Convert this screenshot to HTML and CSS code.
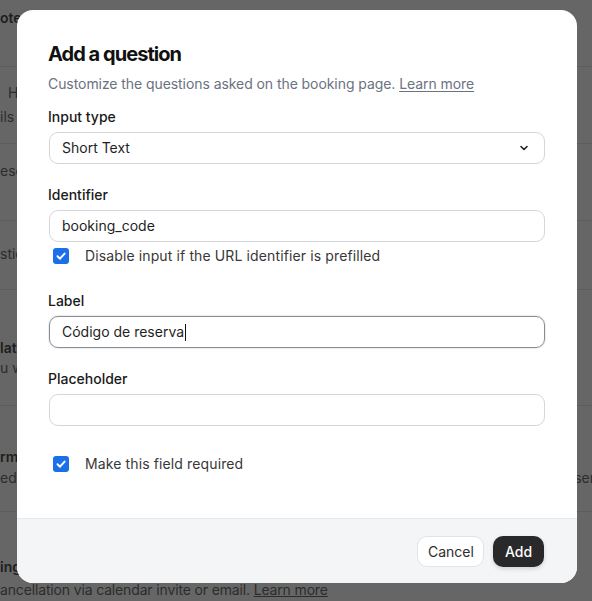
FILE: index.html
```html
<!DOCTYPE html>
<html>
<head>
<meta charset="utf-8">
<link rel="stylesheet" href="styles.css">
</head>
<body>
<div class="page">
  <div class="row r1"><span class="strong">otes</span></div>
  <div class="row r2"><span class="ind">H</span><span>ils</span></div>
  <div class="row r3"><span>esc</span></div>
  <div class="row r4"><span>stic</span></div>
  <div class="row r5"><span class="strong">lat</span><span>u w</span></div>
  <div class="row r6"><span class="strong">rma</span><span class="split"><span>ed</span><span class="far">ser</span></span></div>
  <div class="row r7"><span class="strong">ing</span><span class="last">ancellation via calendar invite or email. <u>Learn more</u></span></div>

  <div class="overlay">
    <div class="modal">
      <div class="body">
        <h1 class="title">Add a question</h1>
        <p class="sub">Customize the questions asked on the booking page. <u>Learn more</u></p>

        <div class="label first">Input type</div>
        <div class="field select">
          <span>Short Text</span>
          <svg width="12" height="12" viewBox="0 0 12 12"><path d="M3 4.5 L6 7.5 L9 4.5" fill="none" stroke="#222" stroke-width="1.6" stroke-linecap="round" stroke-linejoin="round"/></svg>
        </div>

        <div class="label">Identifier</div>
        <div class="field">booking_code</div>
        <div class="check near">
          <span class="box"><svg width="12" height="12" viewBox="0 0 12 12"><path d="M2.5 6.3 L5 8.7 L9.6 3.6" fill="none" stroke="#fff" stroke-width="2" stroke-linecap="round" stroke-linejoin="round"/></svg></span>
          <span>Disable input if the URL identifier is prefilled</span>
        </div>

        <div class="label gap25">Label</div>
        <div class="field focus">Código de reserva<span class="caret"></span></div>

        <div class="label">Placeholder</div>
        <div class="field"></div>

        <div class="check far-check">
          <span class="box"><svg width="12" height="12" viewBox="0 0 12 12"><path d="M2.5 6.3 L5 8.7 L9.6 3.6" fill="none" stroke="#fff" stroke-width="2" stroke-linecap="round" stroke-linejoin="round"/></svg></span>
          <span>Make this field required</span>
        </div>
      </div>
      <div class="footer">
        <button class="btn cancel">Cancel</button>
        <button class="btn add">Add</button>
      </div>
    </div>
  </div>
</div>
</body>
</html>
```
FILE: styles.css
```css
* { box-sizing: border-box; }
html, body { margin: 0; padding: 0; }
body { font-family: Inter, "Noto Sans", sans-serif; }

.page {
  position: relative;
  width: 592px;
  height: 601px;
  overflow: hidden;
  background: #666666;
  color: #2c2c2c;
  font-size: 14px;
  line-height: 20px;
}
.row {
  display: flex;
  flex-direction: column;
  border-bottom: 1px solid #5c5c5c;
  white-space: nowrap;
}
.row .strong { font-weight: 600; color: #1e1e1e; }
.row .ind { padding-left: 8px; }
.row .last { letter-spacing: -0.15px; }
.r1 { height: 67px; padding-top: 8px; }
.r2 { height: 77px; padding-top: 16px; gap: 4px; }
.r3 { height: 77px; padding-top: 17px; }
.r4 { height: 69px; padding-top: 23px; }
.r5 { height: 116px; padding-top: 48px; }
.r6 { height: 106px; padding-top: 41px; gap: 1px; }
.r7 { height: 95px; padding-top: 45px; gap: 3px; border-bottom: none; }
.split { display: flex; justify-content: space-between; }
.far { margin-right: -3px; }

.overlay {
  position: absolute;
  inset: 0;
  display: flex;
  justify-content: center;
  align-items: flex-start;
  padding: 10px 0 0 2px;
}
.modal {
  width: 560px;
  height: 573px;
  background: #ffffff;
  border-radius: 16px;
  overflow: hidden;
  display: flex;
  flex-direction: column;
  color: #1f1f1f;
}
.body {
  flex: 1;
  padding: 32px 32px 0 31px;
}
.title {
  margin: 0;
  font-size: 20px;
  line-height: 24px;
  font-weight: 700;
  letter-spacing: -0.95px;
  color: #111111;
}
.sub {
  margin: 8px 0 0 0;
  font-size: 14px;
  line-height: 20px;
  color: #6b7280;
  letter-spacing: -0.07px;
}
.sub u { text-underline-offset: 2px; }
.label {
  margin-top: 21px;
  font-size: 14px;
  line-height: 20px;
  font-weight: 500;
  color: #1a1a1a;
}
.label.first { margin-top: 13px; }
.label.gap25 { margin-top: 25px; }
.field {
  margin-top: 5px;
  margin-left: 1px;
  height: 32px;
  border: 1px solid #d4d6da;
  border-radius: 9px;
  padding: 0 12px;
  display: flex;
  align-items: center;
  font-size: 14px;
  color: #1f1f1f;
}
.select { justify-content: space-between; padding-right: 14px; }
.focus { border-color: #8a8d93; box-shadow: 0 0 0 1px #eceef1; }
.caret {
  display: inline-block;
  width: 1px;
  height: 17px;
  background: #111;
  margin-left: 1px;
}
.check {
  display: flex;
  align-items: center;
  height: 20px;
  font-size: 14px;
  color: #383838;
  padding-left: 5px;
  letter-spacing: 0.12px;
}
.check.near { margin-top: 4px; }
.check.far-check { margin-top: 28px; }
.box {
  width: 16px;
  height: 16px;
  border-radius: 3px;
  background: #1b6fe8;
  display: flex;
  align-items: center;
  justify-content: center;
  margin-right: 16px;
}
.footer {
  height: 65px;
  background: #f4f5f7;
  border-top: 1px solid #e7e8eb;
  display: flex;
  justify-content: flex-end;
  align-items: center;
  gap: 9px;
  padding: 0 33px 0 0;
}
.btn {
  font-family: Inter, "Noto Sans", sans-serif;
  font-size: 14px;
  height: 31px;
  border-radius: 10px;
  padding: 0 10px;
  cursor: pointer;
}
.cancel {
  width: 67px;
  background: #ffffff;
  border: 1px solid #e2e3e6;
  color: #2d2d2d;
}
.add {
  width: 51px;
  background: #292929;
  border: none;
  color: #ffffff;
  font-weight: 500;
  box-shadow: 0 2px 4px rgba(0,0,0,0.15);
}
```
